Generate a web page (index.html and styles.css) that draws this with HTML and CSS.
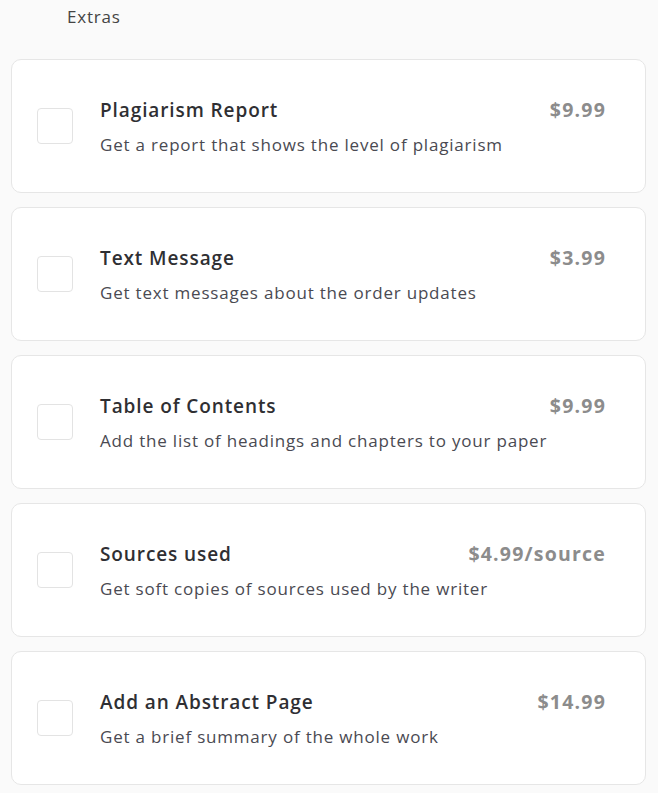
FILE: index.html
```html
<!DOCTYPE html>
<html>
<head>
<meta charset="utf-8">
<link rel="stylesheet" href="styles.css">
</head>
<body>
<div class="page">
  <div class="heading">Extras</div>
  <div class="list">
    <label class="card">
      <span class="box"></span>
      <div class="text">
        <div class="row"><span class="title">Plagiarism Report</span><span class="price">$9.99</span></div>
        <div class="desc">Get a report that shows the level of plagiarism</div>
      </div>
    </label>
    <label class="card">
      <span class="box"></span>
      <div class="text">
        <div class="row"><span class="title">Text Message</span><span class="price">$3.99</span></div>
        <div class="desc">Get text messages about the order updates</div>
      </div>
    </label>
    <label class="card">
      <span class="box"></span>
      <div class="text">
        <div class="row"><span class="title">Table of Contents</span><span class="price">$9.99</span></div>
        <div class="desc">Add the list of headings and chapters to your paper</div>
      </div>
    </label>
    <label class="card">
      <span class="box"></span>
      <div class="text">
        <div class="row"><span class="title">Sources used</span><span class="price">$4.99/source</span></div>
        <div class="desc">Get soft copies of sources used by the writer</div>
      </div>
    </label>
    <label class="card">
      <span class="box"></span>
      <div class="text">
        <div class="row"><span class="title">Add an Abstract Page</span><span class="price">$14.99</span></div>
        <div class="desc">Get a brief summary of the whole work</div>
      </div>
    </label>
  </div>
</div>
</body>
</html>
```
FILE: styles.css
```css
html, body {
  margin: 0;
  padding: 0;
  background: #fafafa;
}
body {
  font-family: "Open Sans", Lato, sans-serif;
  color: #333;
}
.page {
  padding: 0 12px 0 11px;
}
.heading {
  padding: 6px 0 0 56px;
  height: 59px;
  box-sizing: border-box;
  font-size: 17px;
  line-height: 22px;
  letter-spacing: 0.8px;
  color: #444;
}
.list {
  display: flex;
  flex-direction: column;
  gap: 14px;
}
.card {
  display: flex;
  align-items: center;
  background: #fff;
  border: 1px solid #e6e6e6;
  border-radius: 10px;
  padding: 37px 39px 34px 25px;
  height: 134px;
  box-sizing: border-box;
}
.box {
  flex: none;
  width: 34px;
  height: 34px;
  border: 1px solid #e3e3e3;
  border-radius: 4px;
  margin-right: 27px;
  margin-top: -3px;
  background: #fff;
}
.text {
  flex: 1;
}
.row {
  display: flex;
  justify-content: space-between;
  align-items: baseline;
  height: 24px;
  margin-bottom: 11px;
}
.title {
  font-size: 19px;
  font-weight: 600;
  line-height: 24px;
  letter-spacing: 0.9px;
  color: #2f2f33;
}
.price {
  font-size: 19.5px;
  font-weight: 700;
  line-height: 24px;
  letter-spacing: 1.2px;
  color: #8c8c8c;
}
.desc {
  font-size: 17px;
  line-height: 24px;
  letter-spacing: 0.8px;
  color: #4a4a52;
}
```
